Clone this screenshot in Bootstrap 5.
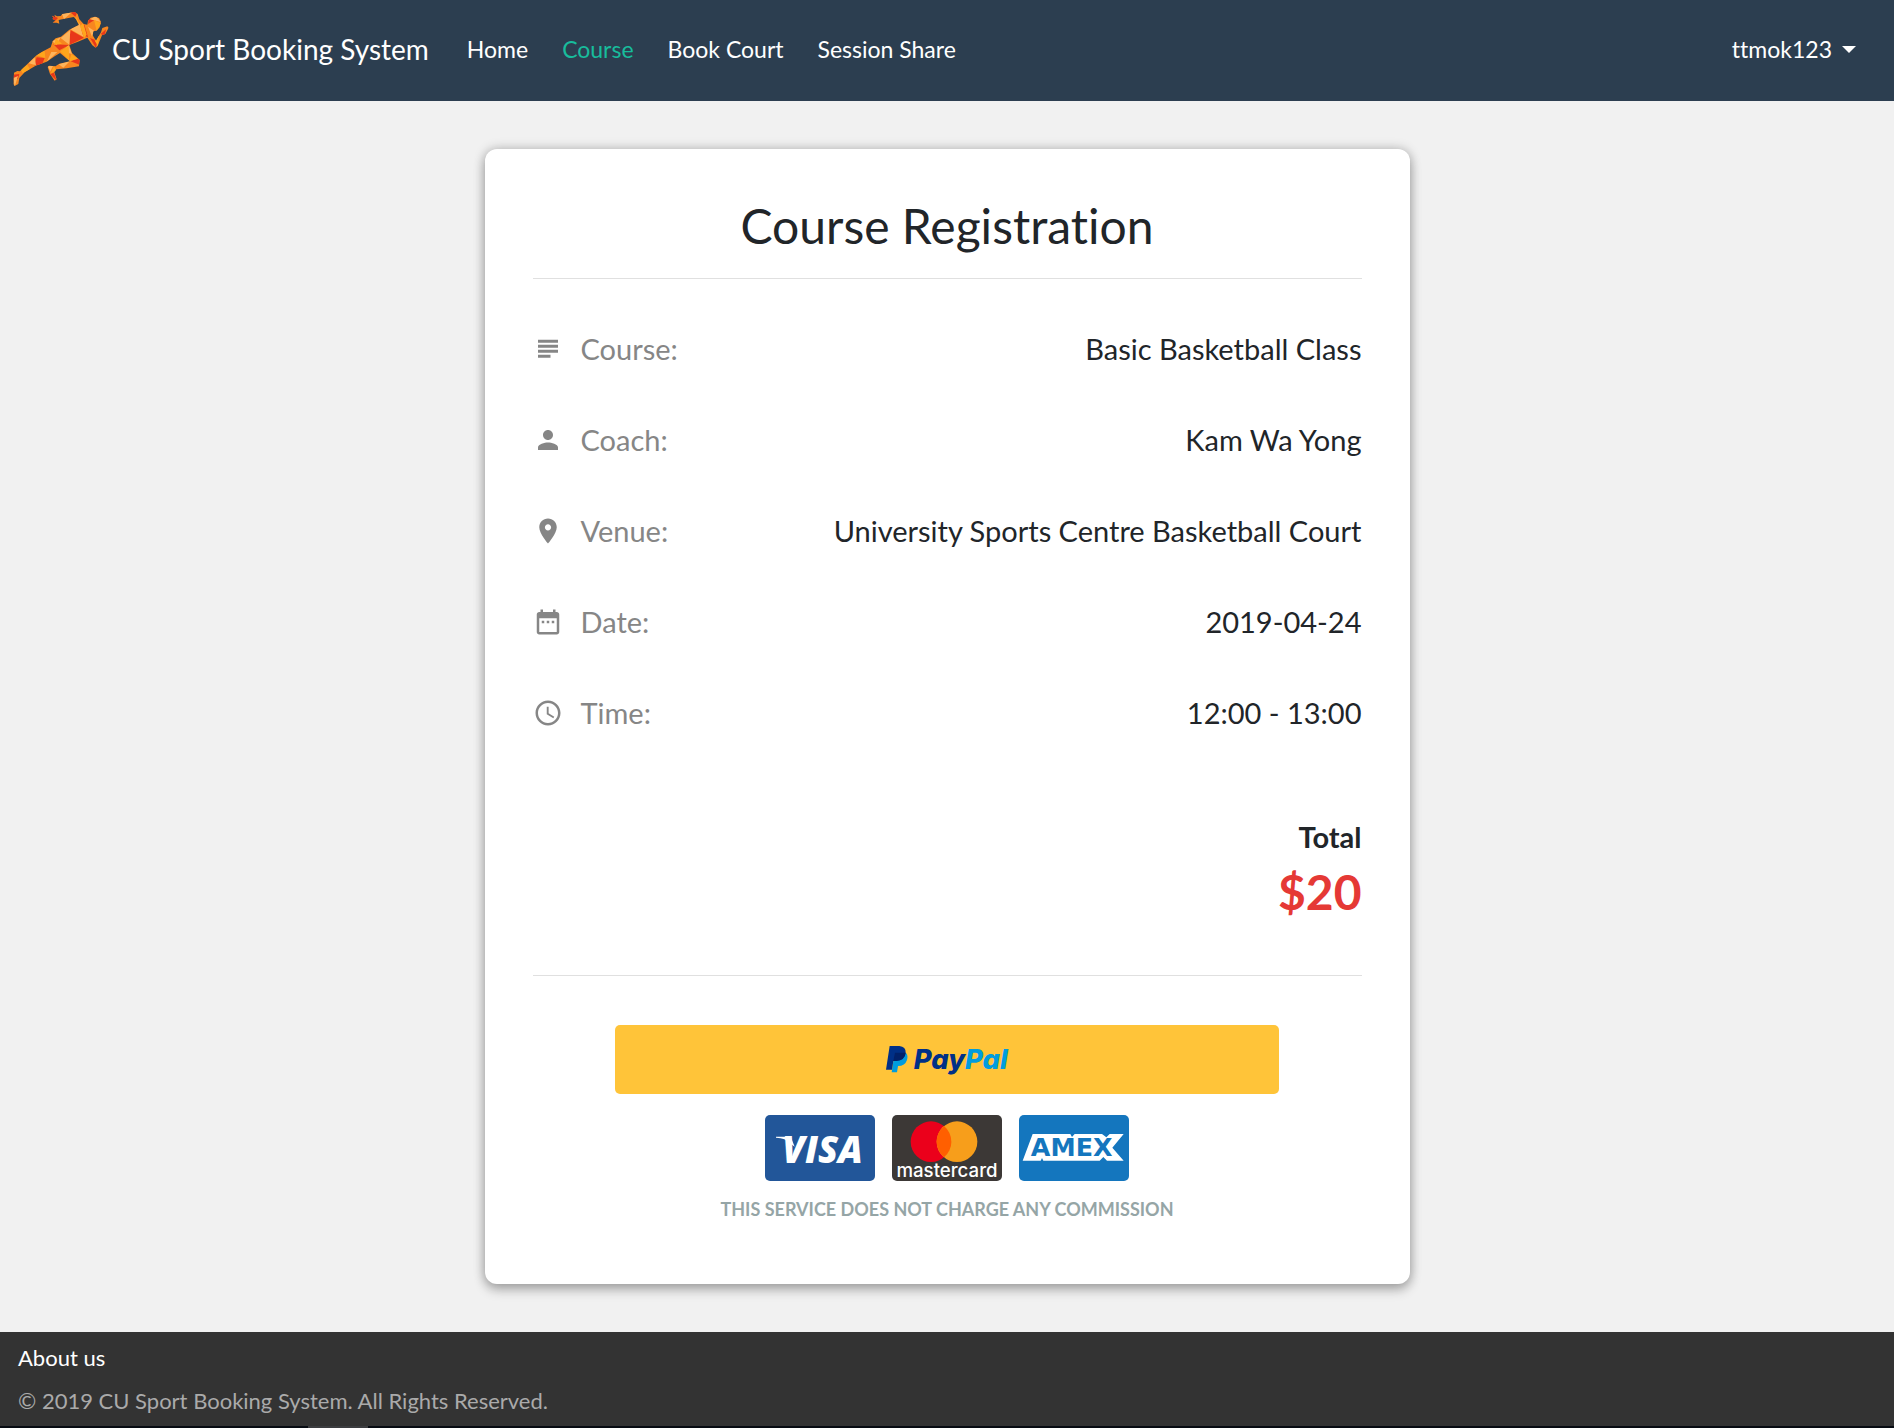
<!DOCTYPE html>
<html lang="en">
<head>
<meta charset="utf-8">
<meta name="viewport" content="width=device-width, initial-scale=1">
<title>CU Sport Booking System</title>
<link href="https://cdn.jsdelivr.net/npm/bootstrap@5.3.0/dist/css/bootstrap.min.css" rel="stylesheet">
<style>
  body { font-family: Lato, "Liberation Sans", sans-serif; font-size: 22px; color: #212529; background: #f1f1f1; font-variant-ligatures: none; }
  .site-nav { --bs-navbar-nav-link-padding-x: 17px; background: #2c3e50; min-height: 101px; padding: 0 21px 4px 12px; font-size: 23px; }
  .site-nav .navbar-brand { font-size: 28px; padding: 0; margin-right: 21px; }
  .site-nav .nav-link { padding-top: 2px; padding-bottom: 0; color: #fff; }
  .site-nav .nav-link.active { color: #18bc9c; }
  .site-nav .dropdown-toggle::after { margin-left: 10px; border-width: 7px 7px 0; vertical-align: 5px; }
  .reg-card { width: calc(50% - 22px); padding: 48px 48px 61px; border-radius: 12px; box-shadow: 0 6px 12px rgba(0,0,0,.24), 0 0 12px rgba(0,0,0,.24); }
  .reg-title { font-size: 48px; font-weight: 400; line-height: 57px; }
  .rule { margin: 0; border-top: 1px solid #000; opacity: .12; }
  .info-row { min-height: 91px; font-size: 29px; }
  .info-row dt { color: #868686; font-weight: 400; }
  .info-row svg { width: 30px; height: 30px; margin-right: 18px; fill: currentColor; }
  .total-box { padding: 57px 0 50px; }
  .total-label { font-size: 29px; line-height: 44px; font-weight: 700; }
  .total-price { font-size: 48px; line-height: 66px; font-weight: 700; color: #e53935; }
  .pay-area { width: 80%; margin-top: 49px; }
  .pay-main { height: 69px; border: 0; border-radius: 5px; background: #ffc439; }
  .pay-cards { gap: 17px; margin: 21px 0 15px; }
  .pay-card { border: 0; padding: 0; background: none; line-height: 0; }
  .pay-note { font-size: 18px; line-height: 27px; font-weight: 700; color: #95a5a6; }
  .site-footer { background: #333; padding: 4px 18px; line-height: 43px; color: #aaa; }
  .site-footer a { color: #fff; }
  .task-strip { height: 2px; background: #070b12; padding-left: 308px; }
  .task-strip div { width: 60px; height: 2px; background: #3c3d40; }
</style>
<script src="https://cdn.jsdelivr.net/npm/bootstrap@5.3.0/dist/js/bootstrap.bundle.min.js"></script>
</head>
<body class="d-flex flex-column min-vh-100">
<nav class="navbar navbar-expand-lg site-nav" data-bs-theme="dark">
  <a class="navbar-brand d-flex align-items-center text-white" href="#">
    <svg width="100" height="78" viewBox="36 28 300 234" aria-hidden="true">
      <defs><clipPath id="runner"><path d="M156 45L166 50 163 42 171 47 182 46 187 40 224 34 233 40 238 56 251 70 262 72 264 60 272 51 285 48 297 52 303 64 299 80 290 90 280 92 278 104 288 120 303 95 307 82 322 77 326 81 316 100 306 104 293 136 287 141 277 134 262 111 232 124 208 133 216 157 239 178 237 197 200 203 169 206 163 215 170 236 164 240 150 220 143 199 148 195 166 197 178 189 210 182 205 178 180 157 165 166 140 183 107 195 74 215 58 232 55 250 44 256 40 250 42 216 52 211 60 212 72 200 108 165 125 154 152 140 158 122 167 113 183 108 208 87 237 73 228 55 221 49 190 55 176 58 178 69 170 66 158 66 166 59 157 55 160 51z"/></clipPath></defs>
      <g clip-path="url(#runner)">
        <path fill="#f7861f" d="M30 30h300v230H30z"/>
        <path fill="#e8371a" d="M211 88l-3 45 44-22zM252 68l-14 30 26 12zM160 131l48 2-30 16zM102 194l8-24 24 2-8 20zM38 222l20-2-4 14-14 6zM212 182l30-12-4 22zM270 112l22 8-4 22zM210 34l16 14 6-14zM154 42l20 10-12 12zM266 54l18 4-20 12zM302 100l16-14-4 20zM150 220l12-4 8 24z"/>
        <path fill="#fdb45c" d="M182 112l29-24-3 44zM211 86l28-18 11 40zM156 122l26-12-12 22zM140 184l14-30 18 0zM186 40l30-6-24 22zM176 191l34-10-20 20zM86 188l18-18 4 24zM40 232l14-6-10 32zM270 56l18-10 14 18zM282 90l-18-12 12 30zM206 134l10 26-30-8zM143 196l16 0-8 16z"/>
        <path fill="#ffa51c" d="M250 68l-10 8 12 36 8-10zM282 58l22 10-14 22zM108 164l26-14 2 22zM62 206l20-14 8 14-22 12zM168 113l18 16-24 4zM180 152l26-16 2 44zM228 50l12 20-22-4zM298 94l-14 26 10 16zM162 195l6 14-16 10zM214 160l20 14-26 8z"/>
      </g>
    </svg>
    <span>CU Sport Booking System</span>
  </a>
  <button class="navbar-toggler" type="button" data-bs-toggle="collapse" data-bs-target="#mainNav" aria-controls="mainNav" aria-expanded="false" aria-label="Toggle navigation"><span class="navbar-toggler-icon"></span></button>
  <div class="collapse navbar-collapse" id="mainNav">
    <ul class="navbar-nav me-auto">
      <li class="nav-item"><a class="nav-link" href="#">Home</a></li>
      <li class="nav-item"><a class="nav-link active" aria-current="page" href="#">Course</a></li>
      <li class="nav-item"><a class="nav-link" href="#">Book Court</a></li>
      <li class="nav-item"><a class="nav-link" href="#">Session Share</a></li>
    </ul>
    <ul class="navbar-nav">
      <li class="nav-item dropdown">
        <a class="nav-link dropdown-toggle" href="#" role="button" data-bs-toggle="dropdown" aria-expanded="false">ttmok123</a>
        <ul class="dropdown-menu dropdown-menu-end"></ul>
      </li>
    </ul>
  </div>
</nav>

<main class="flex-grow-1 py-5">
  <section class="card border-0 mx-auto reg-card">
    <h1 class="reg-title text-center mb-4">Course Registration</h1>
    <hr class="rule">
    <dl class="mt-4 mb-0">
      <div class="info-row d-flex align-items-center justify-content-between">
        <dt class="d-flex align-items-center"><svg viewBox="0 0 24 24" aria-hidden="true"><path d="M4 4.500h16v2.400H4zM4 8.500h16v2.400H4zM4 12.500h16v2.400H4zM4 16.500h10v2.400H4z"/></svg>Course:</dt>
        <dd class="mb-0">Basic Basketball Class</dd>
      </div>
      <div class="info-row d-flex align-items-center justify-content-between">
        <dt class="d-flex align-items-center"><svg viewBox="0 0 24 24" aria-hidden="true"><path d="M12 12c2.210 0 4-1.790 4-4s-1.790-4-4-4-4 1.790-4 4 1.790 4 4 4zm0 2c-2.670 0-8 1.340-8 4v2h16v-2c0-2.660-5.330-4-8-4z"/></svg>Coach:</dt>
        <dd class="mb-0">Kam Wa Yong</dd>
      </div>
      <div class="info-row d-flex align-items-center justify-content-between">
        <dt class="d-flex align-items-center"><svg viewBox="0 0 24 24" aria-hidden="true"><path d="M12 2C8.130 2 5 5.130 5 9c0 5.250 7 13 7 13s7-7.750 7-13c0-3.870-3.130-7-7-7zm0 9.500c-1.380 0-2.500-1.120-2.500-2.500s1.120-2.500 2.500-2.500 2.500 1.120 2.500 2.500-1.120 2.500-2.500 2.500z"/></svg>Venue:</dt>
        <dd class="mb-0">University Sports Centre Basketball Court</dd>
      </div>
      <div class="info-row d-flex align-items-center justify-content-between">
        <dt class="d-flex align-items-center"><svg viewBox="0 0 24 24" aria-hidden="true"><path d="M9 11H7v2h2v-2zm4 0h-2v2h2v-2zm4 0h-2v2h2v-2zm2-7h-1V2h-2v2H8V2H6v2H5c-1.110 0-1.990.9-1.990 2L3 20c0 1.100.89 2 2 2h14c1.100 0 2-.9 2-2V6c0-1.100-.9-2-2-2zm0 16H5V9h14v11z"/></svg>Date:</dt>
        <dd class="mb-0">2019-04-24</dd>
      </div>
      <div class="info-row d-flex align-items-center justify-content-between">
        <dt class="d-flex align-items-center"><svg viewBox="0 0 24 24" aria-hidden="true"><path d="M11.990 2C6.470 2 2 6.480 2 12s4.470 10 9.990 10C17.520 22 22 17.520 22 12S17.520 2 11.990 2zM12 20c-4.420 0-8-3.580-8-8s3.580-8 8-8 8 3.580 8 8-3.580 8-8 8zm.5-13H11v6l5.250 3.150.75-1.230-4.500-2.670z"/></svg>Time:</dt>
        <dd class="mb-0">12:00 - 13:00</dd>
      </div>
    </dl>
    <div class="text-end total-box">
      <div class="total-label">Total</div>
      <div class="total-price">$20</div>
    </div>
    <hr class="rule">
    <div class="pay-area mx-auto text-center">
      <button type="button" class="pay-main w-100 d-flex align-items-center justify-content-center" aria-label="PayPal">
        <svg width="126" height="40" viewBox="74 89 378 120" aria-hidden="true">
          <path fill="#009cde" d="M106 128h34q7 7 3 21-6 18-27 18l-3 19H97z"/>
          <path fill="#003087" d="M91 107h29q20 2 19 20-3 23-29 25h-8l-4 26H80z"/>
          <path fill="#012169" d="M107 127h32q-2 23-29 25h-8z"/>
          <text x="163" y="177" font-family="Inter, sans-serif" font-weight="800" font-style="italic" font-size="82"><tspan fill="#003087">Pay</tspan><tspan fill="#009cde">Pal</tspan></text>
        </svg>
      </button>
      <div class="pay-cards d-flex justify-content-center">
        <button type="button" class="pay-card" aria-label="Visa">
          <svg width="110" height="66" viewBox="0 0 330 198" aria-hidden="true">
            <rect width="330" height="198" rx="15" fill="#225699"/>
            <path fill="#fff" d="M33 65h44l12 30-16-12q-10-13-40-15z"/>
            <text x="52" y="143" font-family="'Open Sans', sans-serif" font-weight="800" font-style="italic" font-size="110" fill="#fff">VISA</text>
          </svg>
        </button>
        <button type="button" class="pay-card" aria-label="Mastercard">
          <svg width="110" height="66" viewBox="0 0 330 198" aria-hidden="true">
            <rect width="330" height="198" rx="15" fill="#3c3836"/>
            <circle cx="117" cy="80" r="61" fill="#eb001b"/>
            <circle cx="195" cy="80" r="61" fill="#f79e1b"/>
            <path fill="#ff5f00" d="M156 33a61 61 0 0 1 0 94 61 61 0 0 1 0-94z"/>
            <text x="165" y="186" text-anchor="middle" font-family="Inter, sans-serif" font-weight="500" font-size="56" fill="#fff">mastercard</text>
          </svg>
        </button>
        <button type="button" class="pay-card" aria-label="American Express">
          <svg width="110" height="66" viewBox="0 0 330 198" aria-hidden="true">
            <rect width="330" height="198" rx="15" fill="#1476be"/>
            <path fill="#fff" d="M41 57h113l5 9 8-9h82l13 10 10-10h42l-34 41 34 39h-50l-11-11-11 11H73l-4-8-4 8H11z"/>
            <text x="158" y="124" text-anchor="middle" font-family="'DejaVu Sans', sans-serif" font-weight="700" font-size="76" fill="#1476be">AMEX</text>
          </svg>
        </button>
      </div>
      <div class="pay-note">THIS SERVICE DOES NOT CHARGE ANY COMMISSION</div>
    </div>
  </section>
</main>

<footer class="site-footer">
  <div><a class="text-decoration-none" href="#">About us</a></div>
  <div>© 2019 CU Sport Booking System. All Rights Reserved.</div>
</footer>
<div class="task-strip"><div></div></div>
</body>
</html>
